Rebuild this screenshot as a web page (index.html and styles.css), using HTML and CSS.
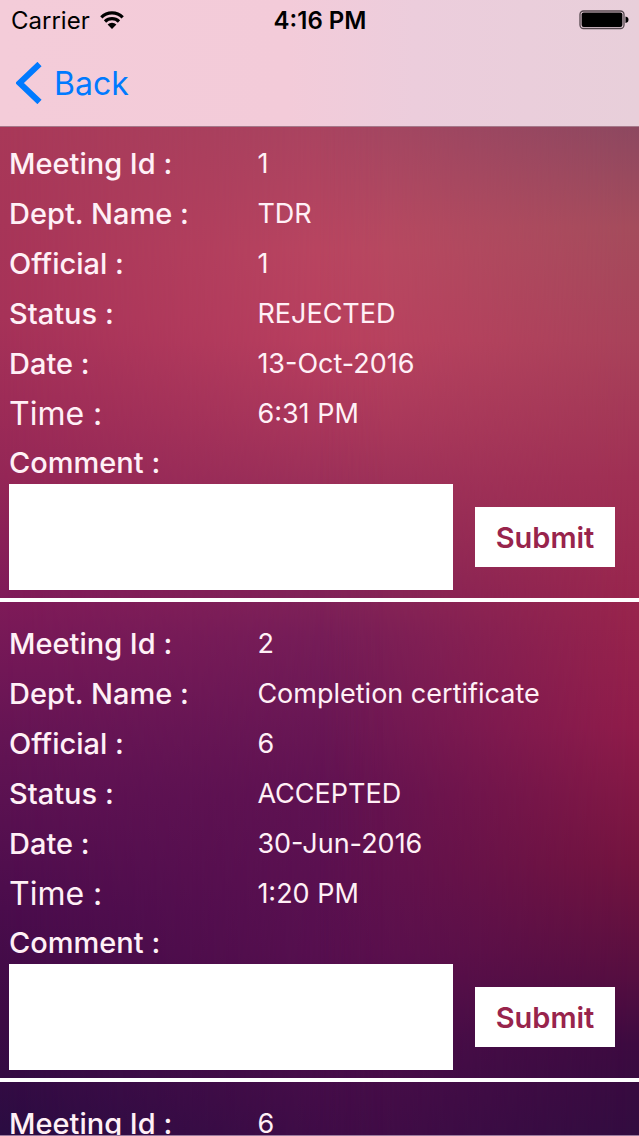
FILE: index.html
```
<!DOCTYPE html>
<html lang="en">
<head>
<meta charset="utf-8">
<meta name="viewport" content="width=device-width, initial-scale=1">
<title>Meetings</title>
<link rel="stylesheet" href="styles.css">
</head>
<body>
<div class="app">
  <header class="header">
    <div class="status-bar">
      <div class="carrier">
        <span>Carrier</span>
        <svg class="wifi" viewBox="0 0 24 18" aria-hidden="true">
          <path d="M1.300 6.300a15.300 15.300 0 0 1 21.400 0M5 10.500a10 10 0 0 1 14 0" fill="none" stroke="#000" stroke-width="3.200"/>
          <path d="M7.600 13.500a6.200 6.200 0 0 1 8.800 0L12 18z"/>
        </svg>
      </div>
      <time class="clock">4:16 PM</time>
      <svg class="battery" viewBox="0 0 50 20" role="img" aria-label="Battery full">
        <rect x="1" y="1" width="44" height="17.500" rx="3.500" fill="none" stroke="#55484f" stroke-width="1.300"/>
        <rect x="2.600" y="2.600" width="40.800" height="14.400" rx="2"/>
        <path d="M46.500 6.500c2 .4 3 1.500 3 3.300s-1 2.900-3 3.300z"/>
      </svg>
    </div>
    <nav class="nav-bar">
      <a class="back" href="#">
        <svg class="chevron" viewBox="0 0 26 42" aria-hidden="true"><path d="M23.500 2 3.500 21l20 19" fill="none" stroke="#007aff" stroke-width="6"/></svg>
        <span>Back</span>
      </a>
    </nav>
  </header>
  <main class="list">
    <form class="meeting">
      <dl class="details">
        <dt>Meeting Id :</dt><dd>1</dd>
        <dt>Dept. Name :</dt><dd>TDR</dd>
        <dt>Official :</dt><dd>1</dd>
        <dt>Status :</dt><dd>REJECTED</dd>
        <dt>Date :</dt><dd>13-Oct-2016</dd>
        <dt class="time">Time :</dt><dd>6:31 PM</dd>
      </dl>
      <label class="comment-label" for="comment-1">Comment :</label>
      <div class="comment-row">
        <textarea class="comment" id="comment-1"></textarea>
        <button class="submit" type="button">Submit</button>
      </div>
    </form>
    <form class="meeting">
      <dl class="details">
        <dt>Meeting Id :</dt><dd>2</dd>
        <dt>Dept. Name :</dt><dd>Completion certificate</dd>
        <dt>Official :</dt><dd>6</dd>
        <dt>Status :</dt><dd>ACCEPTED</dd>
        <dt>Date :</dt><dd>30-Jun-2016</dd>
        <dt class="time">Time :</dt><dd>1:20 PM</dd>
      </dl>
      <label class="comment-label" for="comment-2">Comment :</label>
      <div class="comment-row">
        <textarea class="comment" id="comment-2"></textarea>
        <button class="submit" type="button">Submit</button>
      </div>
    </form>
    <form class="meeting">
      <dl class="details">
        <dt>Meeting Id :</dt><dd>6</dd>
      </dl>
    </form>
  </main>
</div>
</body>
</html>
```

FILE: styles.css
```
* {
  box-sizing: border-box;
}

body {
  margin: 0;
  font-family: Inter, "Liberation Sans", sans-serif;
}

.app {
  position: relative;
  isolation: isolate;
  display: flex;
  flex-direction: column;
  height: 100vh;
  overflow: hidden;
  border-bottom: 1px solid #9a7a9c;
  background: linear-gradient(#aa4662 11%, #bc4862 22%, #bc4260 30%, #aa385c 38%, #8e2a58 48%, #761e58 56%, #601252 70%, #5a1050 84%, #4a0e4a 94%, #440c48);
}

/* Left and right colour columns blend into the middle one. */
.app::before,
.app::after {
  content: "";
  position: absolute;
  inset: 0;
  z-index: -1;
}

.app::before {
  background: linear-gradient(#a83858 11%, #a63258 28%, #942656 42%, #7e1a58 53%, #641454 65%, #4a0c4c 80%, #3c0a44 90%, #2a0c42);
  mask-image: linear-gradient(to right, #000, transparent 60%);
}

.app::after {
  background: linear-gradient(#8c4860 11%, #a44c5c 20%, #a8425a 30%, #a03054 42%, #98244c 54%, #901c4a 64%, #74143f 76%, #560e40 86%, #3c0a40 92%, #320c40);
  mask-image: linear-gradient(to left, #000, transparent 50%);
}

.header {
  background: linear-gradient(to right, #f4ccd9, #f3cbd9 45%, #eccddc 65%, #e8cfda);
  border-bottom: 1px solid #a5788a;
}

.status-bar {
  display: grid;
  grid-template-columns: 1fr auto 1fr;
  align-items: center;
  height: 40px;
  padding: 0 10px 0 11px;
}

.carrier {
  display: flex;
  align-items: center;
  gap: 10px;
  font-size: 24px;
}

.wifi {
  width: 24px;
  height: 18px;
}

.clock {
  font-size: 24px;
  font-weight: 600;
}

.battery {
  justify-self: end;
  width: 50px;
  height: 20px;
}

.nav-bar {
  display: flex;
  align-items: center;
  height: 86px;
  padding: 0 16px;
}

.back {
  display: flex;
  align-items: center;
  gap: 12px;
  color: #007aff;
  font-size: 32px;
  text-decoration: none;
}

.chevron {
  width: 26px;
  height: 42px;
}

.list {
  flex: 1;
  min-height: 0;
  overflow: hidden;
}

.meeting {
  padding: 16px 9px 8px;
  border-bottom: 4px solid #fff;
}

.meeting:first-child {
  padding-top: 11px;
}

.details {
  display: grid;
  grid-template-columns: 40% 1fr;
  grid-auto-rows: 50px;
  align-items: center;
  margin: 0;
  color: #fff0f6;
}

.details dt,
.comment-label {
  font-size: 29px;
  font-weight: 500;
  color: #fff0f6;
}

.details dt.time {
  font-size: 32px;
  font-weight: 400;
}

.details dd {
  margin: 0;
  font-size: 27px;
}

.comment-label {
  display: block;
  height: 46px;
  line-height: 50px;
}

.comment-row {
  display: flex;
  align-items: center;
  gap: 22px;
  padding-right: 15px;
}

.comment {
  flex: 1;
  min-width: 0;
  height: 106px;
  padding: 8px;
  border: 0;
  border-radius: 0;
  background: #fff;
  font: 400 27px Inter, "Liberation Sans", sans-serif;
  resize: none;
}

.submit {
  width: 140px;
  height: 60px;
  padding: 0;
  border: 0;
  background: #fff;
  color: #98244c;
  font: 600 29px Inter, "Liberation Sans", sans-serif;
}
```
